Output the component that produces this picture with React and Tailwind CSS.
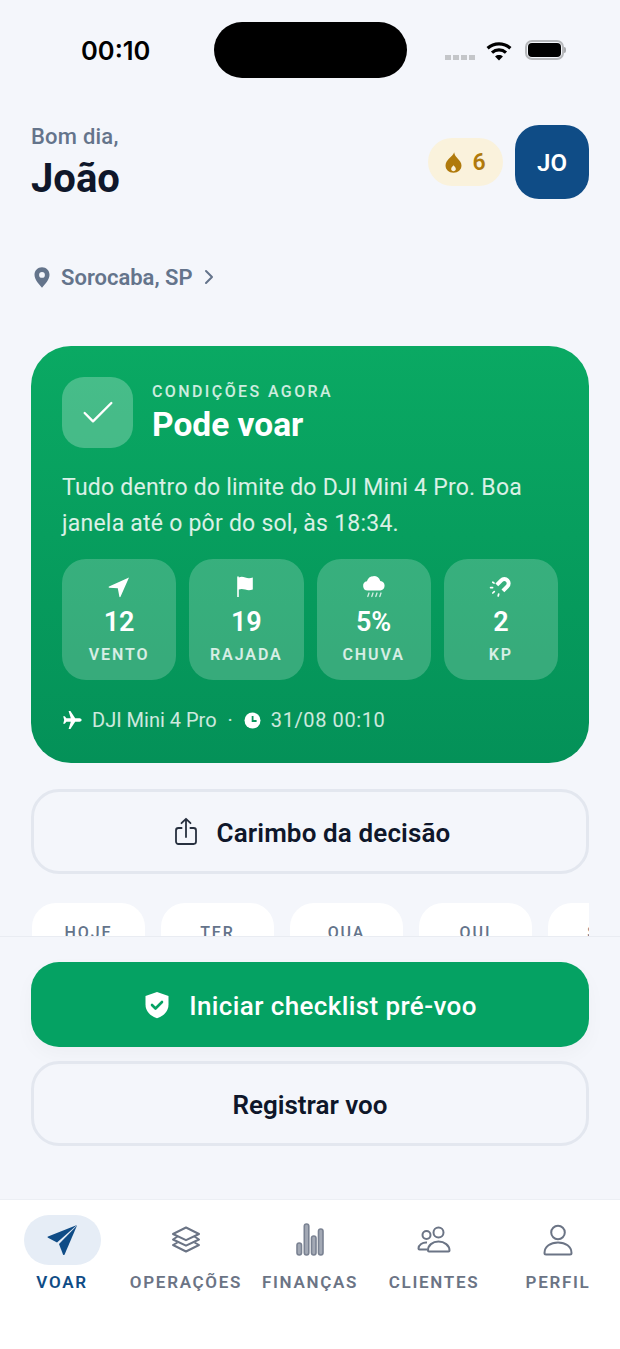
import React from 'react';
import { Check, ChevronRight } from 'lucide-react';

// Ícones desenhados à mão
const Pin = () => (
  <svg width="16" height="21" viewBox="0 0 16 21">
    <path fillRule="evenodd" fill="#64748b" d="M8 0.300C3.700 0.300 0.500 3.500 0.500 7.800c0 4.600 4.300 9.500 7.500 12.900 3.200-3.400 7.500-8.300 7.500-12.900C15.500 3.500 12.300 0.300 8 0.300zM8 5a2.900 2.900 0 1 1 0 5.800A2.900 2.900 0 0 1 8 5z" />
  </svg>
);

const Flame = () => (
  <svg width="17" height="21" viewBox="0 0 16 21" preserveAspectRatio="none">
    <path fillRule="evenodd" fill="#b07a0c" d="M8.600 0.300c0.400 3 1.900 4.600 3.500 6.500 1.600 1.900 3.400 3.900 3.400 6.700 0 4.200-3.200 7.200-7.500 7.200S0.500 17.700 0.500 13.500c0-3 1.500-4.800 3.100-6.700C6 4.400 8 3 8.600 0.300zM8 13.200c-1.100 1.300-2.200 2.400-2.200 3.900 0 1.300 1 2.200 2.200 2.200s2.200-.9 2.200-2.200c0-1.500-1.100-2.600-2.200-3.900z" />
  </svg>
);

const Wifi = () => (
  <svg width="26" height="20" viewBox="0 0 26 20" fill="none" stroke="#000" strokeWidth="3.200">
    <path d="M1.600 7.200C8 1.400 18 1.400 24.400 7.200" />
    <path d="M6 11.600c4-3.600 10-3.600 14 0" />
    <path d="M13 19.600l-3.900-4.200c2.200-1.900 5.600-1.900 7.800 0z" fill="#000" stroke="none" />
  </svg>
);

const Wind = () => (
  <svg width="24" height="24" viewBox="0 0 24 24">
    <path fill="#fff" d="M22 2.500L2 11.600c-.6.300-.4 1.100.2 1.100l8.600.6 1.600 8.400c.1.600.9.700 1.100.1z" />
  </svg>
);

const FlagIcon = () => (
  <svg width="24" height="24" viewBox="0 0 24 24">
    <path fill="#fff" d="M3.200 1.500h1.600v1c2-1 4.200-.8 6.400 0 2.600.9 5 .9 7.600 0v12c-2.600 1-5 1-7.600.1-2.300-.8-4.400-1-6.400-.1V22H3.200z" />
  </svg>
);

const Rain = () => (
  <svg width="24" height="24" viewBox="0 0 24 24">
    <path fill="#fff" d="M5.600 15.500a4.700 4.700 0 0 1-.7-9.300A7 7 0 0 1 18.300 6a4.800 4.800 0 0 1 .3 9.500z" />
    <g stroke="#fff" strokeWidth="1.300" strokeLinecap="round" opacity=".8">
      <path d="M7 18l-1.200 3.500M11 18l-1.200 3.500M15 18l-1.200 3.500M19 18l-1.200 3.500" />
    </g>
  </svg>
);

const Magnet = () => (
  <svg width="24" height="24" viewBox="0 0 24 24" fill="none">
    <path stroke="#fff" strokeWidth="4" d="M7.800 9.800L12.300 5.300A4.300 4.300 0 0 1 18.400 11.400L13.900 15.900" />
    <path stroke="#fff" strokeWidth="1.700" strokeLinecap="round" d="M3.800 7.200l1.300.9M1.600 12.600h2M3.800 18l1.500-1.400M9.200 21l.5-2" />
  </svg>
);

const Plane = () => (
  <svg width="20" height="20" viewBox="0 0 20 20">
    <path fill="#fff" d="M19.600 10c0-1-1-1.700-2-1.700h-4.400L8.400 1H6.600l2.200 7.300H4.400L2.800 6.200H1.200L2.200 10l-1 3.800h1.600l1.600-2.100h4.400L6.600 19h1.800l4.800-7.300h4.400c1 0 2-.7 2-1.700z" />
  </svg>
);

const Clock = () => (
  <svg width="17" height="17" viewBox="0 0 17 17">
    <circle cx="8.500" cy="8.500" r="8" fill="#fff" />
    <path d="M8.600 4v5h4" fill="none" stroke="#08965c" strokeWidth="1.800" />
  </svg>
);

const Share = () => (
  <svg width="24" height="30" viewBox="0 0 24 30" fill="none" stroke="#27303f" strokeWidth="1.800" strokeLinecap="round" strokeLinejoin="round">
    <path d="M12 2v18M7.500 6.200L12 1.800l4.500 4.400" />
    <path d="M7.600 11H4.400A2.400 2.400 0 0 0 2 13.400v11.200A2.400 2.400 0 0 0 4.400 27h15.200a2.400 2.400 0 0 0 2.400-2.400V13.400A2.400 2.400 0 0 0 19.600 11h-3.200" />
  </svg>
);

const Shield = () => (
  <svg width="28" height="28" viewBox="0 0 28 28">
    <path fill="#fff" d="M14 1l11.500 4v8.500c0 7-4.800 11.400-11.500 13.800C7.300 24.900 2.500 20.500 2.500 13.500V5z" />
    <path d="M9 14l3.500 3.500L19 11" fill="none" stroke="#05a263" strokeWidth="2.600" strokeLinecap="round" strokeLinejoin="round" />
  </svg>
);

const Send = () => (
  <svg width="32" height="33" viewBox="0 0 32 33">
    <path fill="#0f4c86" d="M31 1L2 12.600q-1.200.6 0 1.200L11 18.500z" />
    <path fill="#0f4c86" d="M31 1.500L13 20l4 10.500q.8 1.200 1.600 0z" />
  </svg>
);

const Layers = () => (
  <svg width="30" height="30" viewBox="0 0 30 30" fill="none" stroke="#6b7485" strokeWidth="2" strokeLinejoin="round">
    <path d="M15 2.500L28 9l-13 6.200L2 9z" />
    <path d="M6.500 11.500L2 14.500l13 6.200 13-6.200-4.500-3" />
    <path d="M6.500 17.500L2 20l13 6.500L28 20l-4.500-2.500" />
  </svg>
);

const Bars = () => (
  <svg width="30" height="34" viewBox="0 0 30 34" fill="#a3a9b5" stroke="#7a8292" strokeWidth="1.600">
    <rect x="2" y="20" width="4.500" height="12" rx="2.200" />
    <rect x="9.300" y="1" width="4.500" height="31" rx="2.200" />
    <rect x="16.500" y="13" width="4.500" height="19" rx="2.200" />
    <rect x="23.500" y="6" width="4.500" height="26" rx="2.200" />
  </svg>
);

const Users = () => (
  <svg width="34" height="28" viewBox="0 0 34 28" fill="none" stroke="#6b7485" strokeWidth="2">
    <circle cx="9.500" cy="9" r="4" />
    <circle cx="21.500" cy="6.500" r="5" />
    <path d="M11 24.500c-.2-5 4.500-9 10.500-9s11 4 11 9c0 .6-.4 1-1 1H12c-.6 0-1-.4-1-1z" />
    <path d="M10 16.500c-4.500-.4-8.500 2.500-8.500 6 0 .6.400 1 1 1H10" />
  </svg>
);

const User = () => (
  <svg width="30" height="32" viewBox="0 0 30 32" fill="none" stroke="#6b7485" strokeWidth="2">
    <circle cx="15" cy="8.500" r="6.800" />
    <path d="M1.500 29c0-6.500 6-10.500 13.500-10.500S28.500 22.500 28.500 29c0 .8-.6 1.500-1.500 1.500H3c-.9 0-1.500-.7-1.500-1.500z" />
  </svg>
);

const metrics = [
  { id: 'vento', icon: Wind, value: '12', label: 'VENTO' },
  { id: 'rajada', icon: FlagIcon, value: '19', label: 'RAJADA' },
  { id: 'chuva', icon: Rain, value: '5%', label: 'CHUVA' },
  { id: 'kp', icon: Magnet, value: '2', label: 'KP' },
];

const days = ['HOJE', 'TER', 'QUA', 'QUI', 'SEX'];

const tabs = [
  { id: 'voar', icon: Send, label: 'VOAR', active: true },
  { id: 'operacoes', icon: Layers, label: 'OPERAÇÕES' },
  { id: 'financas', icon: Bars, label: 'FINANÇAS' },
  { id: 'clientes', icon: Users, label: 'CLIENTES' },
  { id: 'perfil', icon: User, label: 'PERFIL' },
];

export default function App() {
  return (
    <div className="relative flex flex-col w-[620px] h-[1349px] overflow-hidden bg-[#f4f6fb] font-['Roboto',sans-serif] text-[#0f172a]">
      {/* Ilha dinâmica */}
      <div className="absolute left-[214px] top-[22px] w-[193px] h-[56px] rounded-[28px] bg-black" />

      {/* Área rolável */}
      <div className="h-[936px] shrink-0 overflow-hidden">
        {/* Status bar */}
        <div className="flex items-center h-[100px] pl-[81px] pr-[54px] justify-between">
          <span className="mt-[3px] font-['Inter',sans-serif] text-[25.500px] font-semibold text-black">00:10</span>
          <div className="flex items-center">
            <div className="flex gap-[2px] mt-[14px]">
              <span className="w-[6px] h-[5px] bg-[#c4c6c9]" />
              <span className="w-[6px] h-[5px] bg-[#c4c6c9]" />
              <span className="w-[6px] h-[5px] bg-[#c4c6c9]" />
              <span className="w-[6px] h-[5px] bg-[#c4c6c9]" />
            </div>
            <div className="ml-[11px] mr-[13px] mt-[1px]"><Wifi /></div>
            <div className="flex items-center">
              <div className="w-[39px] h-[20px] rounded-[7px] border-2 border-[#b5b7ba] p-[1px]">
                <div className="w-full h-full rounded-[4px] bg-black" />
              </div>
              <div className="w-[2px] h-[6px] rounded-r bg-[#a9abae]" />
            </div>
          </div>
        </div>

        {/* Cabeçalho */}
        <div className="flex items-start justify-between mt-[25px] px-[31px]">
          <div>
            <p className="text-[22px] leading-[24px] font-medium tracking-[0.01em] text-[#64748b]">Bom dia,</p>
            <p className="text-[40px] leading-[46px] font-bold mt-[7px]">João</p>
          </div>
          <div className="flex items-center gap-[12px]">
            <div className="flex items-center justify-center gap-[10px] w-[75px] h-[48px] rounded-[24px] bg-[#faf2dc]">
              <Flame />
              <span className="pt-[3px] text-[23px] font-semibold text-[#b07a0c]">6</span>
            </div>
            <div className="flex items-center justify-center w-[74px] h-[74px] pt-[2px] rounded-[24px] bg-[#0f4c86] text-white text-[24px] font-semibold">JO</div>
          </div>
        </div>

        {/* Localização */}
        <div className="flex items-center mt-[62px] ml-[34px] h-[26px]">
          <Pin />
          <span className="ml-[11px] text-[22px] font-semibold text-[#64748b]">Sorocaba, SP</span>
          <ChevronRight size={24} strokeWidth={2} className="ml-[4px] text-[#64748b]" />
        </div>

        {/* Cartão de condições */}
        <div className="mt-[56px] mx-[31px] h-[417px] rounded-[40px] p-[31px] bg-gradient-to-b from-[#0aa963] to-[#049158] text-white">
          <div className="flex items-center gap-[19px]">
            <div className="flex items-center justify-center w-[71px] h-[71px] rounded-[22px] bg-white/25">
              <Check size={40} strokeWidth={1.400} />
            </div>
            <div className="pt-[2px]">
              <p className="text-[16px] leading-[20px] font-medium tracking-[0.15em] text-white/80">CONDIÇÕES AGORA</p>
              <p className="text-[33.500px] leading-[40px] font-bold mt-[3px]">Pode voar</p>
            </div>
          </div>
          <p className="mt-[22px] text-[23px] leading-[36px] tracking-[0.01em] text-white/85">
            Tudo dentro do limite do DJI Mini 4 Pro. Boa janela até o pôr do sol, às 18:34.
          </p>
          <div className="grid grid-cols-4 gap-[13px] mt-[17px]">
            {metrics.map((m) => (
              <div key={m.id} className="flex flex-col items-center h-[121px] pt-[16px] rounded-[24px] bg-white/20">
                <m.icon />
                <span className="mt-[7px] text-[27px] leading-[32px] font-semibold">{m.value}</span>
                <span className="mt-[7px] text-[16px] leading-[20px] font-semibold tracking-[0.12em] text-white/80">{m.label}</span>
              </div>
            ))}
          </div>
          <div className="flex items-center mt-[27px] text-[20px] leading-[26px] text-white/80">
            <Plane />
            <span className="ml-[10px]">DJI Mini 4 Pro</span>
            <span className="mx-[11px]">·</span>
            <Clock />
            <span className="ml-[10px] tracking-[0.03em]">31/08 00:10</span>
          </div>
        </div>

        {/* Carimbo */}
        <div className="flex items-center justify-center gap-[19px] mt-[26px] mx-[31px] h-[85px] pl-[4px] rounded-[28px] border-[3px] border-[#e3e7ef] text-[26px] font-semibold">
          <Share />
          <span className="pt-[4px] tracking-[0.005em]">Carimbo da decisão</span>
        </div>

        {/* Previsão dos dias */}
        <div className="flex gap-[16px] mt-[29px] ml-[32px] w-[557px] overflow-hidden">
          {days.map((d) => (
            <div key={d} className="shrink-0 w-[113px] h-[110px] pt-[18px] rounded-[24px] bg-white text-center text-[16px] font-medium tracking-[0.12em] text-[#64748b]">
              {d}
            </div>
          ))}
        </div>
      </div>

      {/* Ações */}
      <div className="flex flex-col flex-1 gap-[14px] px-[31px] pt-[25px] border-t border-[#e9ecf2] bg-[#f4f6fb]">
        <div className="flex items-center justify-center gap-[18px] h-[85px] rounded-[28px] bg-[#05a263] text-white text-[26px] font-medium shadow-[0_8px_20px_rgba(15,23,42,0.03)]">
          <Shield />
          <span className="pt-[4px] tracking-[0.4px]">Iniciar checklist pré-voo</span>
        </div>
        <div className="flex items-center justify-center h-[85px] pt-[4px] rounded-[28px] border-[3px] border-[#e3e7ef] text-[26px] font-semibold">
          Registrar voo
        </div>
      </div>

      {/* Navegação inferior */}
      <div className="grid grid-cols-5 h-[150px] shrink-0 pt-[15px] bg-white border-t border-[#eceff4]">
        {tabs.map((t) => (
          <div key={t.id} className="flex flex-col items-center">
            <div className={`flex items-center justify-center w-[77px] h-[50px] rounded-[25px] ${t.active ? 'bg-[#e6edf6]' : ''}`}>
              <t.icon />
            </div>
            <span className={`mt-[7px] whitespace-nowrap text-[17px] leading-[20px] font-semibold tracking-[0.1em] ${t.active ? 'text-[#0f4c86]' : 'text-[#6b7485]'}`}>
              {t.label}
            </span>
          </div>
        ))}
      </div>
    </div>
  );
}
